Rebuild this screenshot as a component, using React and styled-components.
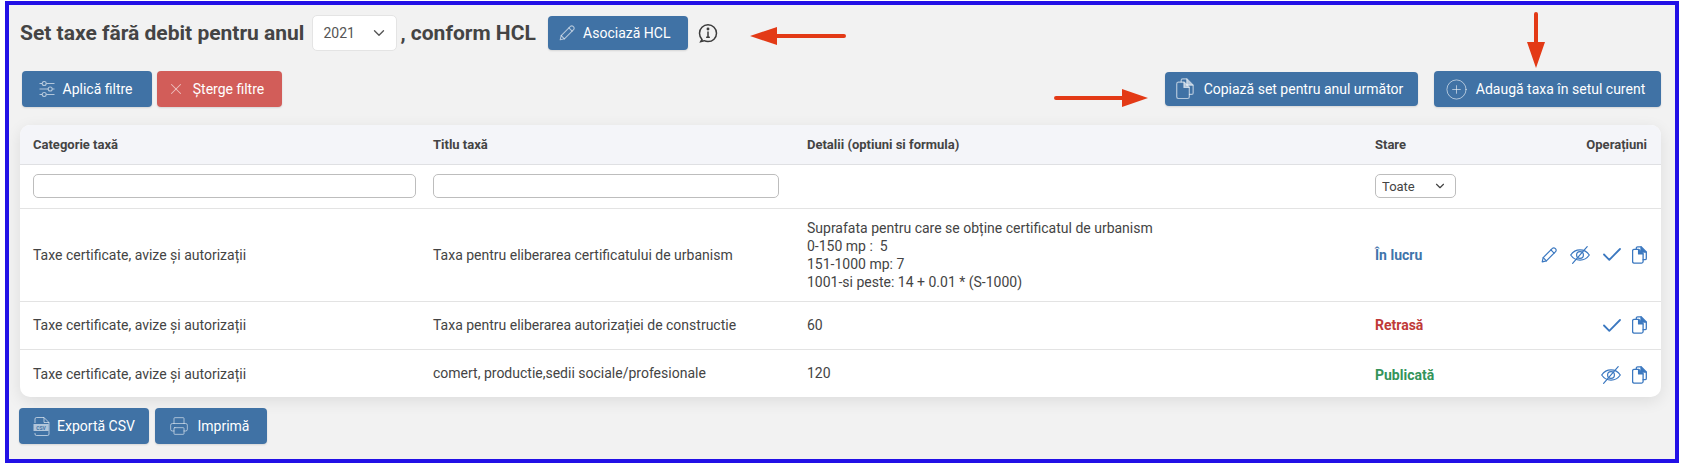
import React from "react"
import styled, { createGlobalStyle } from "styled-components"
import { ChevronDown, CirclePlus, Printer, X } from "lucide-react"

const GlobalStyle = createGlobalStyle`
  html, body {
    margin: 0;
    background: #fff;
  }
  body {
    font-family: Roboto, "Liberation Sans", sans-serif;
    color: #444;
  }
`

const Frame = styled.div`
  position: relative;
  box-sizing: border-box;
  width: 1674px;
  height: 462px;
  margin: 1px 0 1px 5px;
  padding: 10px 14px 0 11px;
  border: 4px solid #2210e6;
  background: #f2f2f2;
  overflow: hidden;
`

const TitleRow = styled.div`
  display: flex;
  align-items: center;
  height: 36px;
`

const Title = styled.h1`
  margin: ${(p) => p.$margin};
  font-size: 21px;
  font-weight: 700;
  line-height: 36px;
  color: #444;
  white-space: nowrap;
`

const SelectWrap = styled.div`
  position: relative;
  display: inline-flex;
  color: ${(p) => (p.$small ? "#444" : "#555")};

  svg {
    position: absolute;
    top: 50%;
    right: 9px;
    transform: translateY(-50%);
    pointer-events: none;
  }
`

const Select = styled.select`
  appearance: none;
  box-sizing: border-box;
  width: ${(p) => (p.$small ? "81px" : "85px")};
  height: ${(p) => (p.$small ? "24px" : "36px")};
  padding: 0 0 0 ${(p) => (p.$small ? "6px" : "10px")};
  border: 1px solid ${(p) => (p.$small ? "#bdbdbd" : "#e4e4e4")};
  border-radius: 5px;
  background: #fff;
  font-family: inherit;
  font-size: ${(p) => (p.$small ? "13px" : "14px")};
  color: inherit;
`

const Button = styled.button`
  display: inline-flex;
  align-items: center;
  justify-content: center;
  gap: ${(p) => p.$gap || 8}px;
  box-sizing: border-box;
  width: ${(p) => p.$width}px;
  height: ${(p) => p.$height || 36}px;
  padding: 0 ${(p) => p.$pr || 0}px 0 0;
  border: 0;
  border-radius: 4px;
  background: ${(p) => (p.$danger ? "#d25d59" : "#4072a5")};
  box-shadow: 0 1px 2px rgba(0, 0, 0, 0.12);
  font-family: inherit;
  font-size: 14px;
  color: #fff;
  white-space: nowrap;

  svg {
    flex: none;
    color: rgba(255, 255, 255, 0.6);
  }
`

const InfoIcon = styled.svg`
  width: 20px;
  height: 20px;
  margin-left: 10px;
  color: #3c3c3c;
`

const ActionsRow = styled.div`
  display: flex;
  justify-content: space-between;
  align-items: center;
  height: 36px;
  margin-top: 20px;
  padding-left: 2px;
`

const ButtonGroup = styled.div`
  display: flex;
  align-items: center;
  gap: ${(p) => p.$gap}px;
`

const Card = styled.div`
  margin-top: 18px;
  border-radius: 10px;
  background: #fff;
  box-shadow: 0 4px 16px rgba(0, 0, 0, 0.09);
  overflow: hidden;
`

const Table = styled.table`
  width: 100%;
  table-layout: fixed;
  border-collapse: collapse;
  font-size: 14px;
`

const HeadCell = styled.th`
  box-sizing: border-box;
  height: 39px;
  padding: 0 ${(p) => (p.$right ? "14px" : "13px")} 0 13px;
  border-bottom: 1px solid #dfe0e3;
  background: #f4f5f9;
  font-size: 13px;
  font-weight: 700;
  color: #444;
  text-align: ${(p) => (p.$right ? "right" : "left")};
`

const FilterCell = styled.td`
  box-sizing: border-box;
  height: 44px;
  padding: 0 13px;
  border-bottom: 1px solid #e3e3e3;
`

const FilterInput = styled.input`
  display: block;
  box-sizing: border-box;
  width: ${(p) => p.$width}px;
  height: 24px;
  border: 1px solid #bdbdbd;
  border-radius: 5px;
  background: #fff;
`

const Row = styled.tr`
  height: ${(p) => p.$height}px;
`

const Cell = styled.td`
  box-sizing: border-box;
  padding: ${(p) => p.$top || 0}px 13px 0;
  border-bottom: ${(p) => (p.$last ? "0" : "1px solid #e3e3e3")};
  line-height: 18px;
  color: #444;
`

const DetailLine = styled.div`
  white-space: pre;
`

const Status = styled.span`
  font-weight: 700;
  color: ${(p) => p.$color};
`

const Operations = styled.div`
  display: flex;
  justify-content: flex-end;
  align-items: center;
  gap: 13px;
  margin-right: 1px;
  color: #3b78c0;

  svg {
    flex: none;
  }

  svg:last-child {
    margin-left: -2px;
  }
`

const Footer = styled.div`
  display: flex;
  gap: 6px;
  margin: 11px 0 0 -1px;
`

const Arrow = styled.svg`
  position: absolute;
  top: ${(p) => p.$top}px;
  left: ${(p) => p.$left}px;
`

const PencilIcon = ({ size = 16, strokeWidth = 1.2 }) => (
  <svg width={size} height={size} viewBox="0 0 16 16" fill="none" stroke="currentColor" strokeWidth={strokeWidth} strokeLinejoin="round" strokeLinecap="round">
    <path d="M1.200 14.800l1-4.200L11.400 1.400a1.900 1.900 0 0 1 2.700 0l.5.500a1.900 1.900 0 0 1 0 2.700L5.400 13.800z" />
    <path d="M9.900 2.900l3.200 3.200M2.200 10.600l3.200 3.200" />
  </svg>
)

const CopyIcon = ({ size = 15, strokeWidth = 1.3 }) => (
  <svg width={size} height={size * 1.2} viewBox="0 0 15 18" fill="none" stroke="currentColor" strokeWidth={strokeWidth} strokeLinejoin="round" strokeLinecap="round">
    <path d="M1.900 3.400h4.900l4.300 4.300v7.900a1.500 1.500 0 0 1-1.500 1.500H1.900a1.500 1.500 0 0 1-1.300-1.500V4.900a1.500 1.500 0 0 1 1.300-1.500z" />
    <path d="M6.600 3.600v4.300h4.300" fill="currentColor" />
    <path d="M4.300 3.200V2.100A1.300 1.300 0 0 1 5.600.8h3.500l5.200 5.200v6.400a1.300 1.300 0 0 1-1.300 1.300h-1.800" />
    <path d="M9 1v5h5" fill="currentColor" />
  </svg>
)

const EyeOffIcon = () => (
  <svg width="20" height="18" viewBox="0 0 20 18" fill="none" stroke="currentColor" strokeWidth="1.200" strokeLinecap="round">
    <path d="M.700 9C3 5.600 6.200 3.900 10 3.900s7 1.700 9.300 5.100C17 12.400 13.800 14.100 10 14.100S3 12.400.700 9z" />
    <circle cx="10" cy="9" r="3.400" />
    <path d="M2.600 17.300 17.200.7" />
  </svg>
)

const CheckIcon = () => (
  <svg width="18" height="13" viewBox="0 0 18 13" fill="none" stroke="currentColor" strokeWidth="1.800" strokeLinecap="round" strokeLinejoin="round">
    <path d="M1 6.500 6.300 11.800 17 1" />
  </svg>
)

const SlidersIcon = () => (
  <svg width="16" height="16" viewBox="0 0 16 16" fill="none" stroke="currentColor" strokeWidth="1.100">
    <path d="M.500 2.500H3M7.500 2.500h8M.500 8h8.500M13.500 8h2M.500 13.500H3M7.500 13.500h8" />
    <circle cx="5.200" cy="2.500" r="2" />
    <circle cx="11.200" cy="8" r="2" />
    <circle cx="5.200" cy="13.500" r="2" />
  </svg>
)

const CsvIcon = () => (
  <svg width="17" height="19" viewBox="0 0 17 19" fill="none" stroke="currentColor" strokeWidth="1">
    <path d="M2 6V2a1.500 1.500 0 0 1 1.500-1.500H11L16 5.500V17a1.500 1.500 0 0 1-1.500 1.500h-11A1.500 1.500 0 0 1 2 17v-1" />
    <path d="M11 .5v5h5" />
    <rect x=".5" y="7" width="15" height="7" fill="currentColor" stroke="none" />
    <text x="8" y="12.500" textAnchor="middle" fontSize="5" fontWeight="700" fill="#4072a5" stroke="none">CSV</text>
  </svg>
)

const ArrowLeft = ({ top, left }) => (
  <Arrow $top={top} $left={left} width="96" height="18" viewBox="0 0 96 18">
    <path d="M0 9 27 0v7h67a2 2 0 0 1 0 4H27v7z" fill="#e33a16" />
  </Arrow>
)

const ArrowRight = ({ top, left }) => (
  <Arrow $top={top} $left={left} width="94" height="18" viewBox="0 0 94 18">
    <path d="M94 9 68 0v7H2a2 2 0 0 0 0 4h66v7z" fill="#e33a16" />
  </Arrow>
)

const ArrowDown = ({ top, left }) => (
  <Arrow $top={top} $left={left} width="18" height="56" viewBox="0 0 18 56">
    <path d="M9 56 0 30h7V2a2 2 0 0 1 4 0v28h7z" fill="#e33a16" />
  </Arrow>
)

const rows = [
  {
    height: 93,
    title: "Taxa pentru eliberarea certificatului de urbanism",
    details: [
      "Suprafata pentru care se obține certificatul de urbanism",
      "0-150 mp :  5",
      "151-1000 mp: 7",
      "1001-si peste: 14 + 0.01 * (S-1000)",
    ],
    status: "În lucru",
    color: "#3f74ab",
    ops: ["edit", "hide", "check", "copy"],
  },
  {
    height: 48,
    title: "Taxa pentru eliberarea autorizației de constructie",
    details: ["60"],
    status: "Retrasă",
    color: "#bf3a38",
    ops: ["check", "copy"],
  },
  {
    height: 48,
    title: "comert, productie,sedii sociale/profesionale",
    details: ["120"],
    status: "Publicată",
    color: "#34945a",
    ops: ["hide", "copy"],
  },
]

const opIcons = {
  edit: <PencilIcon />,
  hide: <EyeOffIcon />,
  check: <CheckIcon />,
  copy: <CopyIcon />,
}

export default function App() {
  return (
    <>
      <GlobalStyle />
      <Frame>
        <TitleRow>
          <Title $margin="0 8px 0 0">Set taxe fără debit pentru anul</Title>
          <SelectWrap>
            <Select defaultValue="2021">
              <option>2021</option>
            </Select>
            <ChevronDown size={18} strokeWidth={1.8} />
          </SelectWrap>
          <Title $margin="0 12px 0 3px">, conform HCL</Title>
          <Button $width={140} $height={34} $pr={6}>
            <PencilIcon size={16} strokeWidth={1.1} />
            Asociază HCL
          </Button>
          <InfoIcon viewBox="0 0 20 20" fill="none" stroke="currentColor" strokeWidth="1.500" strokeLinecap="round">
            <path d="M4 16.500C2.500 14.900 1.500 12.700 1.500 10.200 1.500 5.500 5.300 1.800 10 1.800s8.500 3.700 8.500 8.400-3.800 8.400-8.500 8.400c-1.400 0-2.700-.3-3.900-.9L2.800 18.500z" />
            <path d="M10 9v5.200M8.700 14.200h2.600" />
            <circle cx="10" cy="6" r=".7" fill="currentColor" />
          </InfoIcon>
        </TitleRow>

        <ActionsRow>
          <ButtonGroup $gap={5}>
            <Button $width={130} $pr={3}>
              <SlidersIcon />
              Aplică filtre
            </Button>
            <Button $width={125} $danger $pr={8}>
              <X size={18} strokeWidth={1.4} />
              Șterge filtre
            </Button>
          </ButtonGroup>
          <ButtonGroup $gap={16}>
            <Button $width={253} $height={34} $gap={10} $pr={4}>
              <CopyIcon size={18} strokeWidth={1} />
              Copiază set pentru anul următor
            </Button>
            <Button $width={227} $pr={5}>
              <CirclePlus size={23} strokeWidth={1} />
              Adaugă taxa în setul curent
            </Button>
          </ButtonGroup>
        </ActionsRow>

        <Card>
          <Table>
            <colgroup>
              <col width="400" />
              <col width="374" />
              <col width="568" />
              <col width="140" />
              <col />
            </colgroup>
            <thead>
              <tr>
                <HeadCell>Categorie taxă</HeadCell>
                <HeadCell>Titlu taxă</HeadCell>
                <HeadCell>Detalii (optiuni si formula)</HeadCell>
                <HeadCell>Stare</HeadCell>
                <HeadCell $right>Operațiuni</HeadCell>
              </tr>
            </thead>
            <tbody>
              <tr>
                <FilterCell>
                  <FilterInput $width={383} />
                </FilterCell>
                <FilterCell>
                  <FilterInput $width={346} />
                </FilterCell>
                <FilterCell />
                <FilterCell>
                  <SelectWrap $small>
                    <Select $small defaultValue="Toate">
                      <option>Toate</option>
                    </Select>
                    <ChevronDown size={14} strokeWidth={2} />
                  </SelectWrap>
                </FilterCell>
                <FilterCell />
              </tr>
              {rows.map((row, i) => {
                const last = i === rows.length - 1
                return (
                  <Row key={row.title} $height={row.height}>
                    <Cell $last={last} $top={last ? 2 : 0}>
                      Taxe certificate, avize și autorizații
                    </Cell>
                    <Cell $last={last}>{row.title}</Cell>
                    <Cell $last={last}>
                      {row.details.map((line) => (
                        <DetailLine key={line}>{line}</DetailLine>
                      ))}
                    </Cell>
                    <Cell $last={last} $top={last ? 4 : 0}>
                      <Status $color={row.color}>{row.status}</Status>
                    </Cell>
                    <Cell $last={last} $top={last ? 4 : 0}>
                      <Operations>
                        {row.ops.map((op) => (
                          <React.Fragment key={op}>{opIcons[op]}</React.Fragment>
                        ))}
                      </Operations>
                    </Cell>
                  </Row>
                )
              })}
            </tbody>
          </Table>
        </Card>

        <Footer>
          <Button $width={130} $gap={7}>
            <CsvIcon />
            Exportă CSV
          </Button>
          <Button $width={112} $gap={9} $pr={4}>
            <Printer size={20} strokeWidth={1.1} />
            Imprimă
          </Button>
        </Footer>

        <ArrowLeft top={22} left={741} />
        <ArrowRight top={84} left={1045} />
        <ArrowDown top={7} left={1518} />
      </Frame>
    </>
  )
}
